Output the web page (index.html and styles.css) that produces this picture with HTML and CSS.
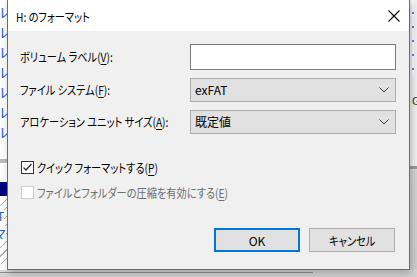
FILE: index.html
```html
<!DOCTYPE html>
<html lang="ja">
<head>
    <meta charset="UTF-8">
    <meta name="viewport" content="width=device-width, initial-scale=1.0">
    <title>H: のフォーマット</title>
    <link rel="stylesheet" href="styles.css">
</head>
<body>
    <div class="desktop">
        <!-- 後ろのウィンドウの見えている部分 -->
        <div class="behind-left">
            <div class="glyphs">ル<br>ル<br>ル<br>ル<br>ル<br>ル<br>ル</div>
            <div class="bar-grey"></div>
            <div class="bar-navy"></div>
            <div class="hatch"><span class="t">T</span><span class="m">マ</span></div>
        </div>
        <div class="behind-right">
            <div class="dots"></div>
            <span class="g">G</span>
            <div class="bar-grey"></div>
        </div>
        <div class="behind-bottom"></div>

        <div class="dialog">
            <div class="titlebar">
                <span class="jp">H: のフォーマット</span>
                <svg class="close" width="12" height="12" viewBox="0 0 12 12">
                    <path d="M0.5 0.5 L11.5 11.5 M11.5 0.5 L0.5 11.5" stroke="#000" stroke-width="1.1" fill="none"/>
                </svg>
            </div>
            <div class="content">
                <div class="form-grid">
                    <label class="label"><span class="jp">ボリューム ラベル(<u>V</u>):</span></label>
                    <div class="textbox"></div>

                    <label class="label"><span class="jp">ファイル システム(<u>F</u>):</span></label>
                    <div class="combo">
                        <span>exFAT</span>
                        <svg width="10" height="6" viewBox="0 0 10 6"><path d="M0.5 0.5 L5 5 L9.5 0.5" stroke="#404040" fill="none"/></svg>
                    </div>

                    <label class="label"><span class="jp">アロケーション ユニット サイズ(<u>A</u>):</span></label>
                    <div class="combo">
                        <span>既定値</span>
                        <svg width="10" height="6" viewBox="0 0 10 6"><path d="M0.5 0.5 L5 5 L9.5 0.5" stroke="#404040" fill="none"/></svg>
                    </div>
                </div>

                <div class="checks">
                    <div class="check-row">
                        <span class="checkbox">
                            <svg width="11" height="11" viewBox="0 0 11 11"><path d="M1.5 5.5 L4 8 L9.5 2" stroke="#333" stroke-width="1.3" fill="none"/></svg>
                        </span>
                        <span class="jp">クイック フォーマットする(<u>P</u>)</span>
                    </div>
                    <div class="check-row disabled">
                        <span class="checkbox"></span>
                        <span class="jp">ファイルとフォルダーの圧縮を有効にする(<u>E</u>)</span>
                    </div>
                </div>

                <div class="buttons">
                    <button class="btn default">OK</button>
                    <button class="btn"><span class="jp">キャンセル</span></button>
                </div>
            </div>
        </div>
    </div>
</body>
</html>
```

FILE: styles.css
```css
body {
    margin: 0;
    font-family: "Noto Sans CJK JP", "Noto Sans", sans-serif;
    font-size: 12px;
    line-height: 16px;
    color: #000;
}
/* Meiryo UI の細いかなに寄せる */
.jp {
    display: inline-block;
    font-feature-settings: "palt" 1;
    transform: scaleX(0.85);
    transform-origin: left center;
    white-space: nowrap;
}
.desktop {
    position: relative;
    width: 417px;
    height: 277px;
    overflow: hidden;
    background: #fff;
}

/* 背景 */
.behind-left {
    position: absolute;
    left: 0;
    top: 0;
    width: 8px;
    height: 270px;
    background: #fff;
    overflow: hidden;
}
.behind-left .glyphs {
    position: absolute;
    left: -5px;
    top: 2px;
    color: #2050c8;
    font-size: 13px;
    line-height: 20px;
}
.behind-left .bar-grey {
    position: absolute;
    left: 0;
    top: 159px;
    width: 8px;
    height: 4px;
    background: #bdbdbd;
}
.behind-left .bar-navy {
    position: absolute;
    left: 0;
    top: 182px;
    width: 8px;
    height: 14px;
    background: #000080;
}
.behind-left .hatch {
    position: absolute;
    left: 0;
    top: 198px;
    width: 8px;
    height: 66px;
    background: repeating-linear-gradient(135deg, #fff 0 5px, #b0b0b0 5px 6px);
}
.hatch .t {
    position: absolute;
    left: -3px;
    top: 10px;
    color: #2060c0;
    font-size: 12px;
    background: #fff;
}
.hatch .m {
    position: absolute;
    left: -6px;
    top: 28px;
    color: #2060c0;
    font-size: 12px;
    background: #fff;
}
.behind-right {
    position: absolute;
    left: 409px;
    top: 0;
    width: 8px;
    height: 277px;
    background: linear-gradient(#f4f4f4, #f4f4f4 165px, #d6d6d6 171px, #d0d0d0);
}
.behind-right .dots {
    position: absolute;
    left: 3px;
    top: 0;
    width: 2px;
    height: 75px;
    background: repeating-linear-gradient(#fff 0 12px, #5a8ad8 12px 14px);
}
.behind-right .g {
    position: absolute;
    left: 3px;
    top: 93px;
    font-family: "Liberation Sans", sans-serif;
    font-size: 11px;
    color: #333;
}
.behind-right .bar-grey {
    position: absolute;
    left: 0;
    top: 166px;
    width: 8px;
    height: 3px;
    background: #9a9a9a;
}
.behind-bottom {
    position: absolute;
    left: 0;
    top: 270px;
    width: 417px;
    height: 7px;
    background: linear-gradient(#d8d8d8, #cfcfcf);
}
.behind-bottom::before {
    content: "";
    position: absolute;
    left: 0;
    top: 2px;
    width: 313px;
    height: 1px;
    background: #8c8c8c;
}

/* ダイアログ */
.dialog {
    position: absolute;
    left: 7px;
    top: -1px;
    width: 401px;
    height: 269px;
    border: 1px solid #1883d7;
    background: #f0f0f0;
    display: flex;
    flex-direction: column;
    box-shadow: 2px 3px 8px rgba(0,0,0,0.25);
}
.titlebar {
    height: 31px;
    background: #fff;
    display: flex;
    align-items: center;
    justify-content: space-between;
    padding: 0 9px 0 8px;
}
.titlebar .jp {
    padding-top: 2px;
}
.close {
    margin-top: 1px;
}
.content {
    flex: 1;
    padding: 13px 13px 0 12px;
    display: flex;
    flex-direction: column;
}
.form-grid {
    display: grid;
    grid-template-columns: 170px 1fr;
    grid-template-rows: 26px 24px 24px;
    row-gap: 8px;
    align-items: center;
}
.label {
    white-space: nowrap;
}
.jp u {
    text-decoration-thickness: 1px;
    text-underline-offset: 2px;
}
.textbox {
    height: 24px;
    background: #fff;
    border: 1px solid #7a7a7a;
}
.combo {
    height: 22px;
    background: #e1e1e1;
    border: 1px solid #adadad;
    display: flex;
    align-items: center;
    justify-content: space-between;
    padding: 0 6px 0 4px;
}
.checks {
    margin-top: 27px;
    margin-left: 1px;
    display: flex;
    flex-direction: column;
    gap: 12px;
}
.check-row {
    display: flex;
    align-items: center;
    gap: 3px;
    height: 13px;
}
.checkbox {
    width: 11px;
    height: 11px;
    border: 1px solid #333;
    background: #fff;
    display: flex;
}
.disabled {
    color: #6d6d6d;
}
.disabled .checkbox {
    border-color: #cccccc;
}
.buttons {
    margin-top: 29px;
    display: flex;
    justify-content: flex-end;
    gap: 9px;
    padding-right: 1px;
}
.btn {
    width: 86px;
    height: 24px;
    background: #e1e1e1;
    border: 1px solid #adadad;
    font-family: inherit;
    font-size: 12px;
    padding: 0;
    color: #000;
}
.btn .jp {
    transform-origin: center;
}
.btn.default {
    border: 2px solid #0078d7;
}
```
